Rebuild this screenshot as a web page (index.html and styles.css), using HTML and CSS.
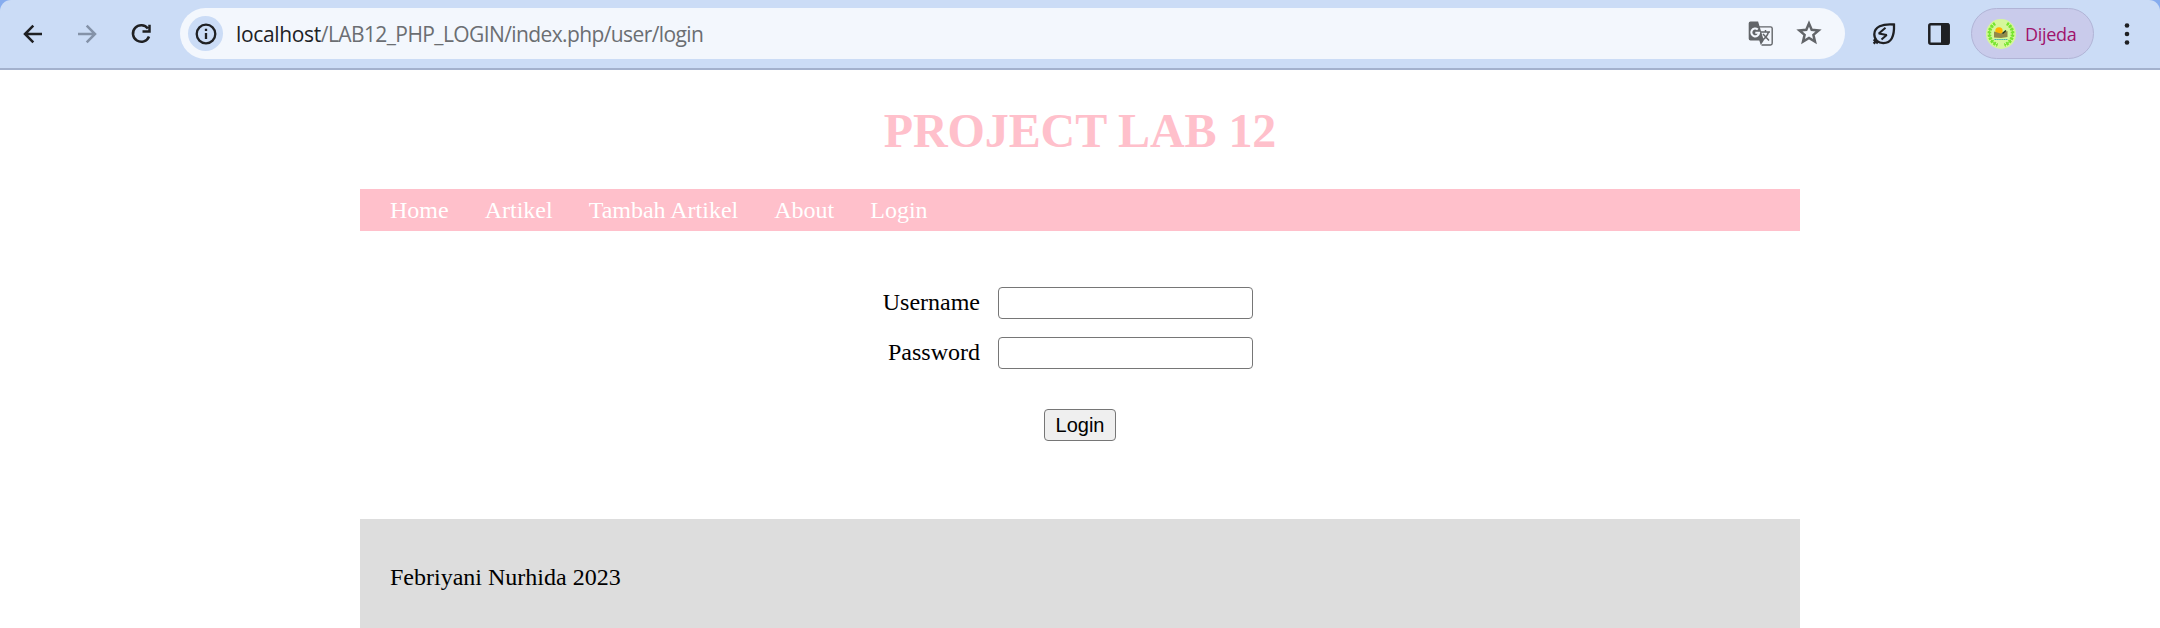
FILE: index.html
```html
<!DOCTYPE html>
<html lang="id">
<head>
<meta charset="utf-8">
<title>Login</title>
<link rel="stylesheet" href="styles.css">
</head>
<body>
<div class="frame">
<header class="toolbar">
  <svg class="icon back" viewBox="0 0 24 24"><path d="M21 12H4.500M12.300 3.700 4 12l8.300 8.300"/></svg>
  <svg class="icon forward" viewBox="0 0 24 24"><path d="M3 12h16.500M11.700 3.700 20 12l-8.300 8.300"/></svg>
  <svg class="icon reload" viewBox="0 0 24 24"><path d="M18.900 6.500A8.300 8.300 0 1 0 20 14.500M20.500 2.700v6.800h-7"/></svg>
  <div class="omnibox">
    <span class="site-info"><svg viewBox="0 0 24 24"><circle cx="12" cy="12" r="9.300"/><path d="M12 11v6M12 6.700v2.400"/></svg></span>
    <div class="url"><span class="host">localhost</span>/LAB12_PHP_LOGIN/index.php/user/login</div>
    <svg class="translate" viewBox="0 0 26 26">
      <path class="sheet" d="M11 5.900h11.500q1.700 0 1.700 1.700v14.700q0 1.700-1.700 1.700H13.500"/>
      <path class="glyph" d="M12.500 11h9.500M17.500 9v2M20.500 11q-1.500 5-6 8M15 13l6 6.500"/>
      <path class="card" d="M2.500.4h7.600l5.700 19.100-3 4.500-1.500-4.500H2.500Q.7 19.500.7 17.700V2.200Q.7.400 2.500.400Z"/>
      <path class="letter" d="M9.800 8.500a3.900 3.900 0 1 0 1.300 3.200H7.300"/>
    </svg>
    <svg class="star" viewBox="0 0 26 26"><path d="m13 3.500 2.700 6.300 6.900.6-5.200 4.500 1.600 6.700-6-3.600-6 3.600 1.600-6.700-5.200-4.500 6.900-.6Z"/></svg>
  </div>
  <svg class="icon leaf" viewBox="0 0 24 24"><path d="M22 2.500C10 1.500 2.300 5 2.300 12.300c0 5.500 3.900 8.800 9 8.800C19 21.100 22.500 15 22 2.500ZM4.800 18.400 1.600 21.600M1.700 17.300l4.200 4"/><path class="bolt" d="m13.500 5.800-6.700 5.800 7.900 1.400-5.200 4.500"/></svg>
  <svg class="icon panel" viewBox="0 0 24 24"><rect x="2.300" y="2.300" width="19.400" height="19.400" rx="1.500"/><path class="solid" d="M14 1.500h8v21h-8Z"/></svg>
  <div class="profile">
    <svg class="avatar" viewBox="0 0 30 30">
      <circle cx="15" cy="15" r="15" fill="#d5f79b"/>
      <path d="M9 4.500A12 12 0 0 0 11.500 26M21 4.500A12 12 0 0 1 18.500 26" fill="none" stroke="#76e52f" stroke-width="3.600" stroke-dasharray="2 1.200"/>
      <path d="M9 4.500A12 12 0 0 0 11.500 26M21 4.500A12 12 0 0 1 18.500 26" fill="none" stroke="#76e52f" stroke-width="1"/>
      <circle cx="13" cy="12" r="3.700" fill="#ffb400"/>
      <path d="m8 12.500 6.500 2 7-2.500v6l-6.500 1-7-.5Z" fill="#92894a"/>
      <path d="m16.500 14.500 3.500-3" stroke="#20331e" stroke-width="1.600"/>
      <path d="M8.500 20.500h13" stroke="#45aeb0" stroke-width="1.200" stroke-dasharray="1.500 .4"/>
    </svg>
    <span class="name">Dijeda</span>
  </div>
  <svg class="dots" viewBox="0 0 6 22"><circle cx="3" cy="2.500" r="2.300"/><circle cx="3" cy="11" r="2.300"/><circle cx="3" cy="19.500" r="2.300"/></svg>
</header>
</div>
<div class="container">
  <h1 class="title">PROJECT LAB 12</h1>
  <nav class="nav">
    <a>Home</a><a>Artikel</a><a>Tambah Artikel</a><a>About</a><a>Login</a>
  </nav>
  <form class="login">
    <label class="field"><span class="label">Username</span><input class="input" type="text"></label>
    <label class="field"><span class="label">Password</span><input class="input" type="password"></label>
    <button class="submit" type="button">Login</button>
  </form>
  <footer class="footer">Febriyani Nurhida 2023</footer>
</div>
</body>
</html>
```
FILE: styles.css
```css
* { box-sizing: border-box; }
body {
  margin: 0;
  height: 628px;
  overflow: hidden;
  display: flex;
  flex-direction: column;
  background: #fff;
  color: #000;
  font: 24px/28px "Liberation Serif", "Times New Roman", serif;
}
.frame { background: #86acee; }
.toolbar {
  display: flex;
  align-items: center;
  height: 70px;
  padding-bottom: 1px;
  background: #cbdcf6;
  border-bottom: 2px solid #a3b1cd;
  border-radius: 11px 11px 0 0;
}
svg { display: block; flex: none; }
.icon {
  width: 24px;
  height: 24px;
  fill: none;
  stroke: #1f2023;
  stroke-width: 2.5;
}
.back { margin-left: 21px; }
.forward { margin-left: 30px; stroke: #8492a8; }
.reload { margin-left: 30px; }
.omnibox {
  display: flex;
  align-items: center;
  width: 1665px;
  height: 51px;
  margin-left: 27px;
  padding: 0 23px 0 8px;
  border-radius: 26px;
  background: #f3f7fd;
}
.site-info {
  display: flex;
  align-items: center;
  justify-content: center;
  width: 35px;
  height: 35px;
  border-radius: 50%;
  background: #cbdcf6;
}
.site-info svg { width: 24px; height: 24px; fill: none; stroke: #1f2023; stroke-width: 2.3; }
.url {
  flex: 1;
  margin-left: 13px;
  color: #6b6e72;
  font: 21px/28px "Open Sans", "Noto Sans", sans-serif;
  letter-spacing: -.6px;
  white-space: nowrap;
}
.host { color: #202124; letter-spacing: -.35px; }
.translate { width: 26px; height: 26px; margin-right: 22px; fill: none; }
.sheet { stroke: #626569; stroke-width: 1.4; }
.glyph { stroke: #626569; stroke-width: 1.5; }
.card { fill: #626569; }
.letter { stroke: #f3f7fd; stroke-width: 2.1; }
.star { width: 26px; height: 26px; margin-top: -2px; fill: none; stroke: #626569; stroke-width: 2.5; }
.leaf { margin-left: 27px; stroke-width: 2.3; }
.bolt { stroke-width: 2; stroke-linejoin: bevel; }
.panel { margin-left: 31px; }
.solid { fill: #1f2023; stroke: none; }
.profile {
  display: flex;
  align-items: center;
  width: 123px;
  height: 51px;
  margin-left: 20px;
  padding-left: 14px;
  border: 1.500px solid #b1b4d6;
  border-radius: 26px;
  background: #c9cbeb;
}
.avatar { width: 30px; height: 30px; }
.name {
  margin-left: 9px;
  color: #a0136c;
  font: 18px/24px "Open Sans", "Noto Sans", sans-serif;
  letter-spacing: -.3px;
}
.dots { width: 6px; height: 22px; margin-left: 30px; fill: #1f2023; }
.container {
  flex: 1;
  display: flex;
  flex-direction: column;
  width: 1440px;
  margin: 0 auto;
}
.title {
  margin: 33px 0 31px;
  color: pink;
  font-size: 48px;
  line-height: 55px;
  letter-spacing: -.1px;
  text-align: center;
}
.nav {
  display: flex;
  gap: 36px;
  height: 42px;
  padding: 7px 30px;
  background: pink;
  color: #fff;
}
.login {
  display: flex;
  flex-direction: column;
  gap: 18px;
  height: 288px;
  padding-top: 56px;
}
.field { display: flex; align-items: center; gap: 18px; height: 32px; }
.label { width: 620px; padding-bottom: 2px; text-align: right; line-height: 30px; }
.input {
  width: 255px;
  height: 32px;
  border: 1px solid #767676;
  border-radius: 4px;
  background: #fff;
}
.submit {
  align-self: center;
  width: 72px;
  height: 32px;
  margin-top: 22px;
  padding: 0;
  border: 1px solid #767676;
  border-radius: 4px;
  background: #efefef;
  color: #000;
  font: 20px/28px "Liberation Sans", Arial, sans-serif;
}
.footer { flex: 1; padding: 44px 30px; background: #ddd; }
```
